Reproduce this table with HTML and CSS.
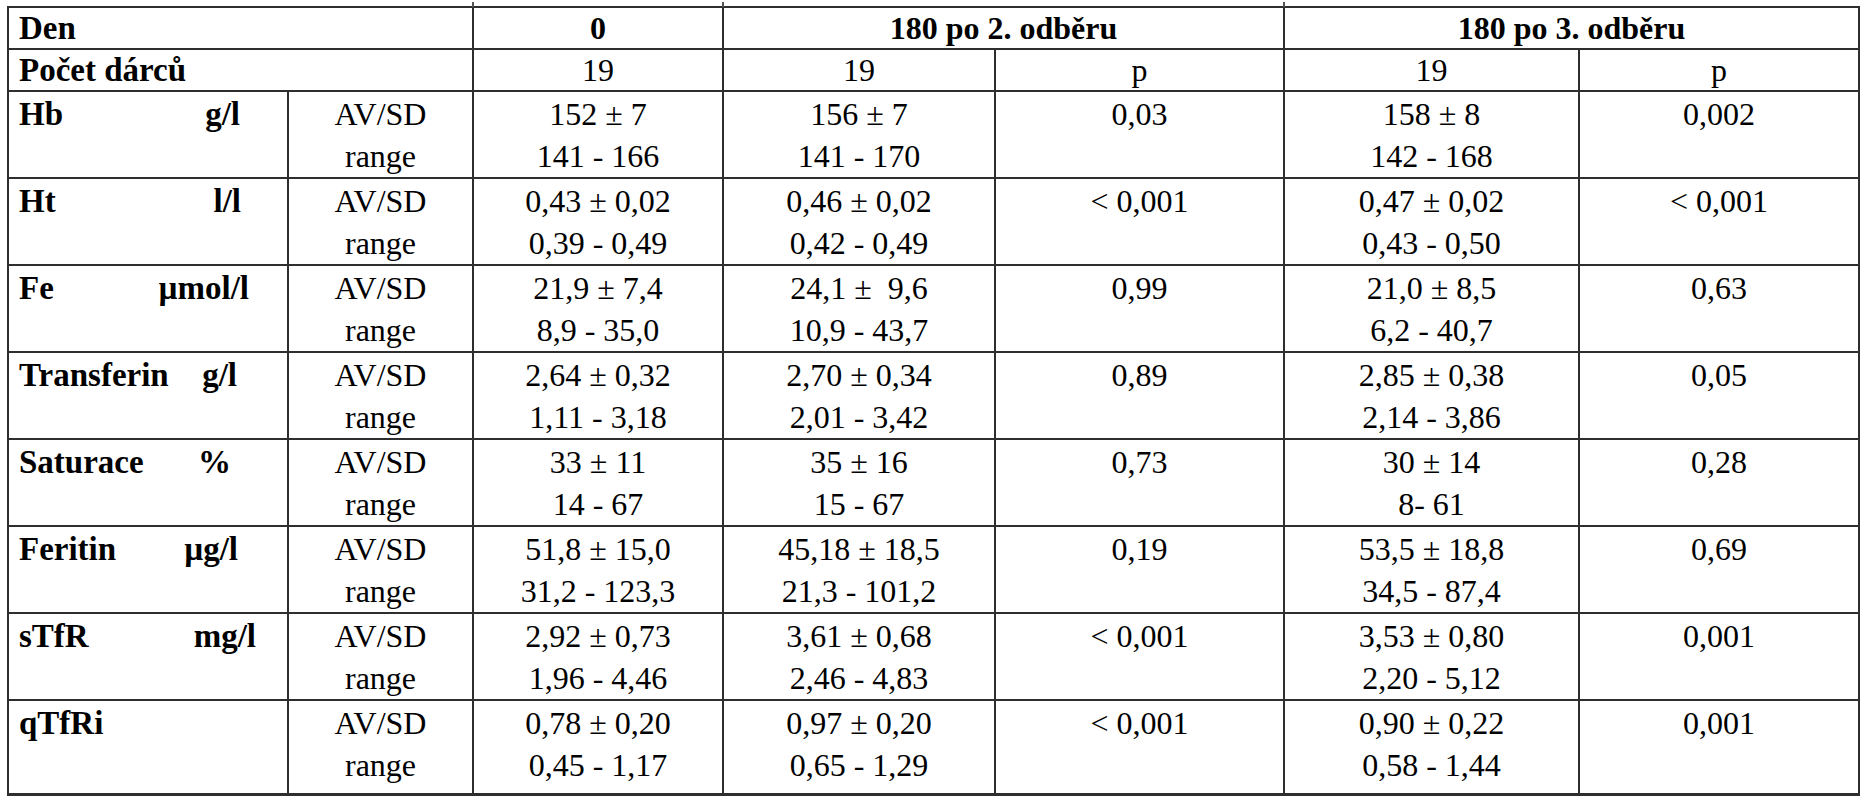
FILE: index.html
```html
<!DOCTYPE html>
<html lang="cs">
<head>
<meta charset="utf-8">
<title>Tabulka</title>
<link rel="stylesheet" href="styles.css">
</head>
<body>
<table class="grid">
  <colgroup>
    <col class="c-lbl"><col class="c-stat"><col class="c-v0"><col class="c-v2"><col class="c-p2"><col class="c-v3"><col class="c-p3">
  </colgroup>
  <tr class="head">
    <td class="hl" colspan="2">Den</td>
    <td class="tick">0</td>
    <td class="tick" colspan="2">180 po 2. odběru</td>
    <td class="tick" colspan="2">180 po 3. odběru</td>
  </tr>
  <tr class="head head2">
    <td class="hl" colspan="2">Počet dárců</td>
    <td>19</td><td>19</td><td>p</td><td>19</td><td>p</td>
  </tr>
  <tr class="data">
    <td class="lbl u-hb"><div class="lw"><span>Hb</span><span>g/l</span></div></td>
    <td><div>AV/SD</div><div>range</div></td>
    <td><div>152 ± 7</div><div>141 - 166</div></td>
    <td><div>156 ± 7</div><div>141 - 170</div></td>
    <td><div>0,03</div></td>
    <td><div>158 ± 8</div><div>142 - 168</div></td>
    <td><div>0,002</div></td>
  </tr>
  <tr class="data">
    <td class="lbl u-ht"><div class="lw"><span>Ht</span><span>l/l</span></div></td>
    <td><div>AV/SD</div><div>range</div></td>
    <td><div>0,43 ± 0,02</div><div>0,39 - 0,49</div></td>
    <td><div>0,46 ± 0,02</div><div>0,42 - 0,49</div></td>
    <td><div>&lt; 0,001</div></td>
    <td><div>0,47 ± 0,02</div><div>0,43 - 0,50</div></td>
    <td><div>&lt; 0,001</div></td>
  </tr>
  <tr class="data">
    <td class="lbl u-fe"><div class="lw"><span>Fe</span><span>µmol/l</span></div></td>
    <td><div>AV/SD</div><div>range</div></td>
    <td><div>21,9 ± 7,4</div><div>8,9 - 35,0</div></td>
    <td><div>24,1 ± &nbsp;9,6</div><div>10,9 - 43,7</div></td>
    <td><div>0,99</div></td>
    <td><div>21,0 ± 8,5</div><div>6,2 - 40,7</div></td>
    <td><div>0,63</div></td>
  </tr>
  <tr class="data">
    <td class="lbl u-tr"><div class="lw"><span>Transferin</span><span>g/l</span></div></td>
    <td><div>AV/SD</div><div>range</div></td>
    <td><div>2,64 ± 0,32</div><div>1,11 - 3,18</div></td>
    <td><div>2,70 ± 0,34</div><div>2,01 - 3,42</div></td>
    <td><div>0,89</div></td>
    <td><div>2,85 ± 0,38</div><div>2,14 - 3,86</div></td>
    <td><div>0,05</div></td>
  </tr>
  <tr class="data">
    <td class="lbl u-sat"><div class="lw"><span>Saturace</span><span>%</span></div></td>
    <td><div>AV/SD</div><div>range</div></td>
    <td><div>33 ± 11</div><div>14 - 67</div></td>
    <td><div>35 ± 16</div><div>15 - 67</div></td>
    <td><div>0,73</div></td>
    <td><div>30 ± 14</div><div>8- 61</div></td>
    <td><div>0,28</div></td>
  </tr>
  <tr class="data">
    <td class="lbl u-fer"><div class="lw"><span>Feritin</span><span>µg/l</span></div></td>
    <td><div>AV/SD</div><div>range</div></td>
    <td><div>51,8 ± 15,0</div><div>31,2 - 123,3</div></td>
    <td><div>45,18 ± 18,5</div><div>21,3 - 101,2</div></td>
    <td><div>0,19</div></td>
    <td><div>53,5 ± 18,8</div><div>34,5 - 87,4</div></td>
    <td><div>0,69</div></td>
  </tr>
  <tr class="data">
    <td class="lbl u-stfr"><div class="lw"><span>sTfR</span><span>mg/l</span></div></td>
    <td><div>AV/SD</div><div>range</div></td>
    <td><div>2,92 ± 0,73</div><div>1,96 - 4,46</div></td>
    <td><div>3,61 ± 0,68</div><div>2,46 - 4,83</div></td>
    <td><div>&lt; 0,001</div></td>
    <td><div>3,53 ± 0,80</div><div>2,20 - 5,12</div></td>
    <td><div>0,001</div></td>
  </tr>
  <tr class="data last">
    <td class="lbl"><div class="lw"><span>qTfRi</span><span></span></div></td>
    <td><div>AV/SD</div><div>range</div></td>
    <td><div>0,78 ± 0,20</div><div>0,45 - 1,17</div></td>
    <td><div>0,97 ± 0,20</div><div>0,65 - 1,29</div></td>
    <td><div>&lt; 0,001</div></td>
    <td><div>0,90 ± 0,22</div><div>0,58 - 1,44</div></td>
    <td><div>0,001</div></td>
  </tr>
</table>
</body>
</html>
```

FILE: styles.css
```css
html, body {
  margin: 0;
  padding: 0;
  background: #ffffff;
}

.grid {
  margin: 6px 0 0 7px;
  border-collapse: collapse;
  table-layout: fixed;
  width: 1851px;
  font-family: "Liberation Serif", "Times New Roman", serif;
  font-size: 32px;
  color: #000000;
}

.c-lbl { width: 280px; }
.c-stat { width: 185px; }
.c-v0 { width: 250px; }
.c-v2 { width: 272px; }
.c-p2 { width: 289px; }
.c-v3 { width: 295px; }
.c-p3 { width: 280px; }

.grid td {
  border: 2px solid #2e2e2e;
  padding: 0;
  vertical-align: top;
  text-align: center;
  line-height: 42px;
}

.head td {
  height: 40px;
  line-height: 40px;
  font-weight: bold;
  font-size: 32px;
}

.head td.tick {
  position: relative;
}

.head td.tick::before {
  content: "";
  position: absolute;
  left: -2px;
  top: -6px;
  width: 2px;
  height: 5px;
  background: #555555;
}

.head2 td {
  font-weight: normal;
  font-size: 32px;
}

.head td.hl {
  text-align: left;
  padding-left: 10px;
  font-weight: bold;
  font-size: 33px;
}

.data td {
  padding-top: 1px;
  padding-bottom: 0;
}

.data.last td {
  padding-bottom: 7px;
  border-bottom-width: 3px;
}

.lbl {
  text-align: left;
  font-weight: bold;
  font-size: 33px;
}

.lbl .lw {
  display: flex;
  justify-content: space-between;
  padding-left: 10px;
  padding-right: 47px;
}

.u-ht .lw { padding-right: 46px; }
.u-fe .lw { padding-right: 38px; }
.u-tr .lw { padding-right: 50px; }
.u-sat .lw { padding-right: 56px; }
.u-fer .lw { padding-right: 49px; }
.u-stfr .lw { padding-right: 31px; }
```
